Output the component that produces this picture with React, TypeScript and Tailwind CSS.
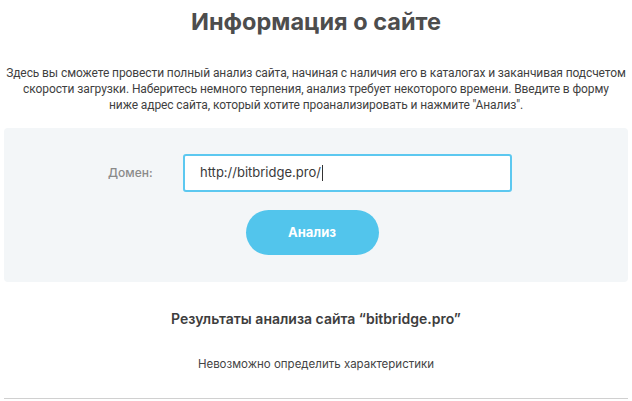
import React from 'react';

const App: React.FC = () => {
  return (
    <div className="w-[632px] h-[401px] bg-white overflow-hidden font-['Inter',sans-serif] text-[#4a4a4a]">
      <h1 className="pt-[7px] text-center text-[23.5px] leading-[29px] font-bold text-[#4d4d4d]">Информация о сайте</h1>

      <p className="mt-[29px] text-center text-[12px] leading-[16px] text-[#3f3f3f] font-['Roboto',sans-serif] tracking-[-0.1px] whitespace-nowrap">
        Здесь вы сможете провести полный анализ сайта, начиная с наличия его в каталогах и заканчивая подсчетом
        <br />
        скорости загрузки. Наберитесь немного терпения, анализ требует некоторого времени. Введите в форму
        <br />
        ниже адрес сайта, который хотите проанализировать и нажмите "Анализ".
      </p>

      <div className="mx-[4px] mt-[15px] h-[154px] rounded-[4px] bg-[#f3f6f8] flex flex-col items-center pt-[26px]">
        <div className="flex items-center pr-[12px]">
          <label className="w-[75px] text-[12px] font-medium text-[#8a8a8a]">Домен:</label>
          <div className="w-[329px] h-[38px] rounded-[3px] border-2 border-[#5cc8f0] bg-white flex items-center pl-[15px] text-[13px] text-[#3a3a3a]">
            http://bitbridge.pro/<span className="ml-[1px] inline-block w-px h-[16px] bg-[#333]" />
          </div>
        </div>
        <button className="mt-[18px] w-[133px] h-[45px] rounded-full bg-[#52c5ec] text-white text-[13px] font-bold ml-[-8px]">
          Анализ
        </button>
      </div>

      <div className="mt-[28px] text-center text-[14px] leading-[18px] font-semibold text-[#3d3d3d]">
        Результаты анализа сайта “bitbridge.pro”
      </div>
      <div className="mt-[28px] text-center text-[11.5px] leading-[16px] text-[#444]">
        Невозможно определить характеристики
      </div>
      <div className="mt-[26px] mx-[4px] h-px bg-[#d0d0d0]" />
    </div>
  );
};

export default App;
